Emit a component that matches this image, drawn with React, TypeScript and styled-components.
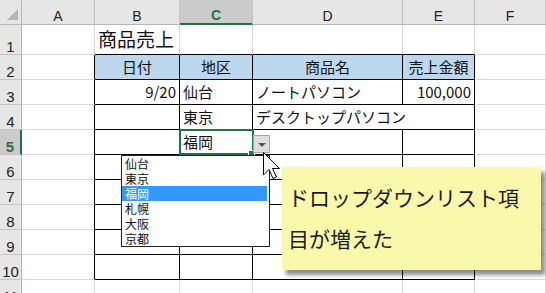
import React from "react";
import styled, { createGlobalStyle } from "styled-components";

const GREEN = "#217346";
const GRID = "#d9d9d9";
const INK = "#111";
const CJK = `"Noto Sans CJK JP", "Noto Sans", sans-serif`;

type Edge = "grid" | "black" | "none";
type Align = "left" | "center" | "right";

interface CellData {
  text?: string;
  align?: Align;
  fill?: string;
  size?: number;
}

const COLS = ["A", "B", "C", "D", "E", "F"];
const ROW_COUNT = 11;
const ACTIVE_COL = 2;
const ACTIVE_ROW = 5;

// sheet contents, keyed "row-col"
const CELLS: Record<string, CellData> = {
  "1-1": { text: "商品売上", size: 19 },
  "2-1": { text: "日付", align: "center", fill: "#bdd7ee" },
  "2-2": { text: "地区", align: "center", fill: "#bdd7ee" },
  "2-3": { text: "商品名", align: "center", fill: "#bdd7ee" },
  "2-4": { text: "売上金額", align: "center", fill: "#bdd7ee" },
  "3-1": { text: "9/20", align: "right" },
  "3-2": { text: "仙台" },
  "3-3": { text: "ノートパソコン" },
  "3-4": { text: "100,000", align: "right" },
  "4-2": { text: "東京" },
  "4-3": { text: "デスクトップパソコン" },
  "5-2": { text: "福岡" },
};

const LIST = ["仙台", "東京", "福岡", "札幌", "大阪", "京都"];

const inTable = (r: number) => r >= 2 && r <= 10;

const rightEdge = (r: number, c: number): Edge => {
  if (r === 4 && c === 3) return "none"; // text runs over into E4
  if (inTable(r) && c <= 4) return "black";
  return "grid";
};

const bottomEdge = (r: number, c: number): Edge => {
  if (c >= 1 && c <= 4 && r >= 1 && r <= 10) return "black";
  return "grid";
};

const edgeColor = (e: Edge) =>
  e === "black" ? "#000" : e === "none" ? "transparent" : GRID;

const GlobalStyle = createGlobalStyle`
  html, body {
    margin: 0;
    padding: 0;
    background: #fff;
    overflow: hidden;
  }
  * {
    box-sizing: border-box;
  }
`;

const Sheet = styled.div`
  position: relative;
  width: 546px;
  height: 293px;
  overflow: hidden;
  background: #fff;
  font-family: ${CJK};
  color: ${INK};
`;

const Grid = styled.div`
  display: grid;
  grid-template-columns: 22px 73px 85px 73px 150px 72px 71px;
  grid-template-rows: 25px 30px repeat(10, 25px);
`;

const Corner = styled.div`
  background: #e6e6e6;
  border-right: 1px solid #b7b7b7;
  border-bottom: 1px solid #b7b7b7;
  display: flex;
  align-items: flex-end;
  justify-content: flex-end;
  padding: 0 2px 3px 0;
`;

const ColHeader = styled.div<{ $active?: boolean }>`
  display: flex;
  align-items: flex-end;
  justify-content: center;
  padding-bottom: 1px;
  font-family: "Liberation Sans", Arial, sans-serif;
  font-size: 14px;
  line-height: 14px;
  font-weight: ${(p) => (p.$active ? 700 : 400)};
  color: ${(p) => (p.$active ? GREEN : "#222")};
  background: ${(p) => (p.$active ? "#cbcbcb" : "#e6e6e6")};
  border-right: 1px solid #c3c3c3;
  border-bottom: ${(p) => (p.$active ? `2px solid ${GREEN}` : "1px solid #b7b7b7")};
`;

const RowHeader = styled.div<{ $active?: boolean }>`
  display: flex;
  align-items: flex-end;
  justify-content: center;
  font-family: "Liberation Sans", Arial, sans-serif;
  font-size: 15px;
  line-height: 15px;
  font-weight: ${(p) => (p.$active ? 700 : 400)};
  color: ${(p) => (p.$active ? GREEN : "#222")};
  background: ${(p) => (p.$active ? "#cbcbcb" : "#e6e6e6")};
  border-bottom: 1px solid #c3c3c3;
  border-right: ${(p) => (p.$active ? `2px solid ${GREEN}` : "1px solid #b7b7b7")};
`;

const Cell = styled.div<{
  $align: Align;
  $fill?: string;
  $size: number;
  $right: Edge;
  $bottom: Edge;
}>`
  min-width: 0;
  display: flex;
  align-items: center;
  justify-content: ${(p) =>
    p.$align === "right" ? "flex-end" : p.$align === "center" ? "center" : "flex-start"};
  padding: 0 3px 2px 3px;
  font-size: ${(p) => p.$size}px;
  line-height: 1;
  white-space: nowrap;
  overflow: visible;
  background: ${(p) => p.$fill ?? "transparent"};
  border-right: 1px solid ${(p) => edgeColor(p.$right)};
  border-bottom: 1px solid ${(p) => edgeColor(p.$bottom)};
`;

const Selection = styled.div`
  position: absolute;
  left: 179px;
  top: 129px;
  width: 75px;
  height: 26px;
  border: 2px solid ${GREEN};
  pointer-events: none;
`;

const FillHandle = styled.div`
  position: absolute;
  left: 248px;
  top: 150px;
  width: 7px;
  height: 7px;
  background: ${GREEN};
  border: 1px solid #fff;
`;

const DropButton = styled.div`
  position: absolute;
  left: 253px;
  top: 135px;
  width: 17px;
  height: 18px;
  background: #dedede;
  border: 1px solid #a8a8a8;
  display: flex;
  align-items: center;
  justify-content: center;
  padding-top: 2px;
`;

const DropArrow = styled.span`
  width: 0;
  height: 0;
  border-left: 4px solid transparent;
  border-right: 4px solid transparent;
  border-top: 4px solid #555;
`;

const DropList = styled.ul`
  position: absolute;
  left: 121px;
  top: 155px;
  width: 149px;
  margin: 0;
  padding: 0 2px 0 0;
  list-style: none;
  background: #fff;
  border: 1px solid #222;
`;

const ListItem = styled.li<{ $selected?: boolean }>`
  height: 15px;
  line-height: 15px;
  padding-left: 3px;
  font-size: 12px;
  color: ${(p) => (p.$selected ? "#fff" : INK)};
  background: ${(p) => (p.$selected ? "#3399ff" : "transparent")};
`;

const Pointer = styled.svg`
  position: absolute;
  left: 263px;
  top: 152px;
`;

const Callout = styled.div`
  position: absolute;
  left: 282px;
  top: 167px;
  width: 259px;
  height: 103px;
  padding: 10px 6px;
  background: #faf8aa;
  box-shadow: 4px 5px 4px rgba(0, 0, 0, 0.45);
  font-size: 21px;
  line-height: 41px;
  color: #1c1c1c;
`;

const CalloutLine = styled.div`
  white-space: nowrap;
`;

export default function App() {
  const rows = Array.from({ length: ROW_COUNT }, (_, i) => i + 1);

  return (
    <>
      <GlobalStyle />
      <Sheet>
        <Grid>
          <Corner>
            <svg width="12" height="12" viewBox="0 0 12 12">
              <polygon points="11,0 11,11 0,11" fill="#b5b5b5" />
            </svg>
          </Corner>
          {COLS.map((c, i) => (
            <ColHeader key={c} $active={i === ACTIVE_COL}>
              {c}
            </ColHeader>
          ))}
          {rows.map((r) => (
            <React.Fragment key={r}>
              <RowHeader $active={r === ACTIVE_ROW}>{r}</RowHeader>
              {COLS.map((_, c) => {
                const d = CELLS[`${r}-${c}`] ?? {};
                return (
                  <Cell
                    key={c}
                    $align={d.align ?? "left"}
                    $fill={d.fill}
                    $size={d.size ?? 15}
                    $right={rightEdge(r, c)}
                    $bottom={bottomEdge(r, c)}
                  >
                    {d.text}
                  </Cell>
                );
              })}
            </React.Fragment>
          ))}
        </Grid>

        <Selection />
        <FillHandle />
        <DropButton>
          <DropArrow />
        </DropButton>

        <DropList>
          {LIST.map((item) => (
            <ListItem key={item} $selected={item === "福岡"}>
              {item}
            </ListItem>
          ))}
        </DropList>

        <Pointer width="20" height="30" viewBox="0 0 20 30">
          <polygon
            points="0.5,0.5 0.5,23 6,17.5 10,26.5 13.5,25 9.5,16.5 16.5,16.5"
            fill="#fff"
            stroke="#000"
            strokeWidth="1"
            strokeLinejoin="miter"
          />
        </Pointer>

        <Callout>
          <CalloutLine>ドロップダウンリスト項</CalloutLine>
          <CalloutLine>目が増えた</CalloutLine>
        </Callout>
      </Sheet>
    </>
  );
}
